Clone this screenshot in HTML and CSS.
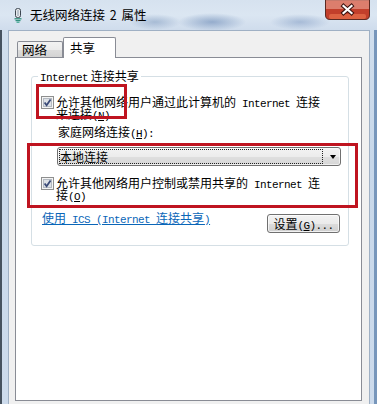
FILE: index.html
```html
<!DOCTYPE html>
<html lang="zh-CN">
<head>
<meta charset="utf-8">
<title>无线网络连接 2 属性</title>
<link rel="stylesheet" href="styles.css">
</head>
<body>
<div class="window">
  <div class="titlebar">
    <svg class="app-icon" width="8" height="15" viewBox="0 0 8 15">
      <rect x="1.5" y="0.5" width="5" height="9" rx="2" fill="#e6e9ec" stroke="#3d4650"/>
      <rect x="3" y="2" width="2" height="6" fill="#b9c2cb"/>
      <rect x="0.5" y="10" width="7" height="1.5" fill="#4a9c8c"/>
      <rect x="1.5" y="12" width="5" height="1.2" fill="#2f8f7f"/>
      <rect x="2.5" y="13.6" width="3" height="1.2" fill="#3aa58f"/>
    </svg>
    <span class="title">无线网络连接 2 属性</span>
    <svg class="close" width="45" height="20" viewBox="0 0 45 20">
      <path d="M0.5 0 V15 Q0.5 19.5 5 19.5 H40 Q44.5 19.5 44.5 15 V0 Z" fill="#c23f2b" stroke="#5a2a22"/>
      <rect x="1" y="0" width="43" height="9" fill="#f2b2a4" fill-opacity="0.55"/>
      <rect x="4" y="14" width="37" height="5" rx="2" fill="#ee7a52" fill-opacity="0.6"/>
      <path d="M18.5 6 L26.5 13 M26.5 6 L18.5 13" stroke="#3a120e" stroke-width="4.2" stroke-linecap="square" fill="none"/>
      <path d="M18.5 6 L26.5 13 M26.5 6 L18.5 13" stroke="#ffffff" stroke-width="2.2" stroke-linecap="square" fill="none"/>
    </svg>
  </div>
  <div class="client">
    <div class="tabs">
      <div class="tab">网络</div>
      <div class="tab active">共享</div>
    </div>
    <div class="panel">
      <fieldset class="group">
        <legend class="group-title"><span class="en">Internet</span> 连接共享</legend>
        <div class="check-row">
          <svg class="checkbox" width="13" height="13" viewBox="0 0 13 13">
            <rect x="0.5" y="0.5" width="12" height="12" fill="#f4f4f4" stroke="#8e8f8f"/>
            <rect x="2.5" y="2.5" width="8" height="8" fill="#dde1e6" stroke="#b4bac2"/>
            <path d="M3.6 6.4 L5.6 9.2 L9.6 3.4" fill="none" stroke="#3b4b78" stroke-width="1.8"/>
          </svg>
          <div class="check-text">允许其他网络用户通过此计算机的<span class="en"> Internet </span>连接来连接<span class="en">(<u>N</u>)</span></div>
        </div>
        <div class="home-label">家庭网络连接<span class="en">(<u>H</u>):</span></div>
        <div class="combo">
          <span class="combo-value">本地连接</span>
          <span class="combo-arrow"></span>
        </div>
        <div class="check-row second">
          <svg class="checkbox" width="13" height="13" viewBox="0 0 13 13">
            <rect x="0.5" y="0.5" width="12" height="12" fill="#f4f4f4" stroke="#8e8f8f"/>
            <rect x="2.5" y="2.5" width="8" height="8" fill="#dde1e6" stroke="#b4bac2"/>
            <path d="M3.6 6.4 L5.6 9.2 L9.6 3.4" fill="none" stroke="#3b4b78" stroke-width="1.8"/>
          </svg>
          <div class="check-text">允许其他网络用户控制或禁用共享的<span class="en"> Internet </span>连接<span class="en">(<u>O</u>)</span></div>
        </div>
        <div class="action-row">
          <a class="link" href="#">使用<span class="en"> ICS (Internet </span>连接共享<span class="en">)</span></a>
          <button class="btn" type="button">设置<span class="en">(<u>G</u>)...</span></button>
        </div>
      </fieldset>
    </div>
  </div>
  <div class="mark mark-one"></div>
  <div class="mark mark-two"></div>
</div>
</body>
</html>
```

FILE: styles.css
```css
* { box-sizing: border-box; }

html, body {
  margin: 0;
  padding: 0;
  background: #c9d8ea;
}

.window {
  position: relative;
  width: 377px;
  height: 404px;
  display: flex;
  flex-direction: column;
  overflow: hidden;
  font-family: "Noto Sans CJK SC", "Noto Sans", sans-serif;
  font-size: 12px;
  color: #000;
  background:
    linear-gradient(to right, #46525f 0 2px, transparent 2px),
    linear-gradient(to left, #7796bb 0 3px, transparent 3px),
    linear-gradient(#d3e0ee, #c8d8ea 40%, #cddbec);
}

.titlebar {
  height: 30px;
  flex: none;
  display: flex;
  align-items: center;
  padding-left: 14px;
  background:
    radial-gradient(ellipse 26px 8px at 155px 22px, rgba(110,140,180,.45), transparent),
    radial-gradient(ellipse 34px 9px at 212px 22px, rgba(95,128,175,.55), transparent),
    radial-gradient(ellipse 30px 8px at 300px 22px, rgba(110,140,185,.45), transparent),
    linear-gradient(#d6e2ef, #dbe6f2 50%, #cfdcec);
}

.app-icon {
  flex: none;
  margin-top: 1px;
}

.title {
  margin-left: 8px;
  font-size: 12.5px;
  line-height: 16px;
  color: #000;
  word-spacing: 2px;
}

.close {
  display: block;
  flex: none;
  margin-left: auto;
  margin-right: 7px;
  align-self: flex-start;
}

.client {
  flex: 1;
  margin: 0 7px 0 8px;
  background: #f0f0f0;
  border: 1px solid #9fb0c4;
  border-bottom: none;
  padding: 6px 7px 3px 6px;
  display: flex;
  flex-direction: column;
}

.tabs {
  height: 21px;
  display: flex;
  align-items: flex-end;
  padding-left: 2px;
  margin-bottom: -1px;
  flex: none;
}

.tab {
  height: 16px;
  width: 46px;
  margin-bottom: 1px;
  padding-left: 4px;
  border: 1px solid #898c95;
  border-bottom: none;
  border-radius: 2px 2px 0 0;
  background: linear-gradient(#f2f2f2, #ebebeb 50%, #dddddd 51%, #d3d3d3);
  font-size: 12.5px;
  line-height: 15px;
}

.tab.active {
  position: relative;
  z-index: 2;
  width: 53px;
  height: 21px;
  margin-bottom: 0;
  margin-left: 0;
  padding-left: 6px;
  background: #fff;
  line-height: 19px;
}

.panel {
  flex: 1;
  position: relative;
  z-index: 1;
  background: #fff;
  border: 1px solid #898c95;
}

.group {
  margin: 11px 12px 0 15px;
  padding: 13px 9px 12px 9px;
  border: 1px solid #d5dfe5;
  border-radius: 3px;
  min-width: 0;
}

.group-title {
  margin-left: -3px;
  padding: 0 2px;
  line-height: 14px;
}

.en {
  font-family: "Liberation Mono", "DejaVu Sans Mono", monospace;
  font-size: 11px;
  letter-spacing: -0.6px;
  line-height: 0;
}

.check-row {
  display: flex;
  align-items: flex-start;
  gap: 2px;
}

.checkbox {
  flex: none;
}

.check-text {
  width: 266px;
  line-height: 12px;
}

.home-label {
  margin-top: 6px;
  padding-left: 17px;
  line-height: 12px;
}

.combo {
  margin-top: 9px;
  margin-left: 16px;
  width: 284px;
  height: 19px;
  display: flex;
  border: 1px solid #707070;
  border-radius: 3px;
  background: linear-gradient(#f3f3f3, #ececec 50%, #dfdfdf 51%, #d6d6d6);
  box-shadow: inset 0 0 0 1px rgba(255,255,255,.6);
}

.combo-value {
  flex: 1;
  margin: 1px 0 1px 1px;
  border: 1px dotted #222;
  line-height: 13px;
}

.combo-arrow {
  width: 17px;
  display: flex;
  align-items: center;
  justify-content: center;
  padding-left: 3px;
}

.combo-arrow::before {
  content: "";
  border-left: 3.5px solid transparent;
  border-right: 3.5px solid transparent;
  border-top: 4px solid #000;
}

.check-row.second {
  margin-top: 11px;
}

.action-row {
  margin-top: 11px;
  display: flex;
  justify-content: space-between;
  align-items: flex-start;
}

.link {
  margin-left: 1px;
  line-height: 12px;
  color: #0a66b8;
  text-decoration: underline;
}

.btn {
  margin: 2px -1px 0 0;
  width: 73px;
  height: 19px;
  padding: 0;
  font-family: inherit;
  font-size: 12px;
  line-height: 15px;
  color: #000;
  border: 1px solid #707070;
  border-radius: 3px;
  background: linear-gradient(#f2f2f2, #ebebeb 50%, #dddddd 51%, #cfcfcf);
  box-shadow: inset 0 0 0 1px rgba(255,255,255,.7);
}

.mark {
  position: absolute;
  z-index: 5;
  border: 3px solid #bf1420;
}

.mark-one {
  left: 36px;
  top: 84px;
  width: 91px;
  height: 35px;
}

.mark-two {
  left: 27px;
  top: 143px;
  width: 331px;
  height: 65px;
}
```
